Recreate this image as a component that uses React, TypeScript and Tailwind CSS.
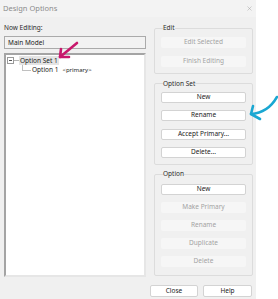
import { X } from "lucide-react";

type Btn = { label: string; disabled?: boolean };

const editButtons: Btn[] = [
  { label: "Edit Selected", disabled: true },
  { label: "Finish Editing", disabled: true },
];

const optionSetButtons: Btn[] = [
  { label: "New" },
  { label: "Rename" },
  { label: "Accept Primary..." },
  { label: "Delete..." },
];

const optionButtons: Btn[] = [
  { label: "New" },
  { label: "Make Primary", disabled: true },
  { label: "Rename", disabled: true },
  { label: "Duplicate", disabled: true },
  { label: "Delete", disabled: true },
];

const DialogButton = ({ label, disabled }: Btn) => (
  <button
    disabled={disabled}
    className={
      disabled
        ? "h-[11px] w-full shrink-0 rounded-[2px] bg-[#f6f6f6] text-[6.5px] leading-none text-[#a3a3a3]"
        : "h-[11px] w-full shrink-0 rounded-[2px] border border-[#d3d3d3] bg-white text-[6.5px] leading-none text-[#1b1b1b]"
    }
  >
    {label}
  </button>
);

const Group = ({
  title,
  buttons,
  className,
  gap,
}: {
  title: string;
  buttons: Btn[];
  className: string;
  gap: string;
}) => (
  <fieldset className={`shrink-0 rounded-[2px] border border-[#dcdcdc] px-[6px] ${className}`}>
    <legend className="ml-[2px] h-[10px] text-[6.5px] leading-[10px] text-[#2a2a2a]">{title}</legend>
    <div className={`flex flex-col ${gap}`}>
      {buttons.map((b) => (
        <DialogButton key={b.label} {...b} />
      ))}
    </div>
  </fieldset>
);

const App = () => {
  return (
    <div className="relative flex h-[299px] w-[278px] bg-white font-['Noto_Sans',sans-serif]">
      <div className="flex h-full w-[256px] flex-col bg-[#f0f0f0]">
        {/* title bar */}
        <div className="flex h-[17px] shrink-0 items-center justify-between bg-[#f3f3f3] pl-[3px] pr-[3px]">
          <span className="text-[7.5px] text-[#8c8c8c]">Design Options</span>
          <X className="h-[7px] w-[7px] text-[#9a9a9a]" strokeWidth={1.5} />
        </div>

        <div className="flex min-h-0 flex-1">
          {/* left column */}
          <div className="flex w-[146px] flex-col pl-[4px]">
            <div className="mt-[6px] h-[10px] shrink-0 text-[6.5px] leading-[10px] text-[#2a2a2a]">Now Editing:</div>
            <div className="mt-[3px] flex h-[13px] shrink-0 items-center border border-[#aaaaaa] bg-[#f2f2f2] pl-[3px] text-[6.5px] text-[#1b1b1b]">
              Main Model
            </div>
            <div className="mt-[4px] min-h-0 flex-1 border-2 border-t-[#a4a4a4] border-l-[#a4a4a4] border-r-[#e6e6e6] border-b-[#e6e6e6] bg-white pt-[1px]">
              <div className="flex h-[9px] items-center pl-[1px]">
                <span className="flex h-[7px] w-[7px] items-center justify-center border border-[#9a9a9a] bg-white">
                  <span className="h-px w-[3px] bg-[#555]" />
                </span>
                <span className="h-px w-[5px] bg-[#b5b5b5]" />
                <span className="bg-[#e4e4e4] px-[1px] text-[6.5px] leading-[9px] text-[#1b1b1b]">Option Set 1</span>
              </div>
              <div className="flex h-[10px] items-start pl-[16px]">
                <span className="h-[6px] w-[9px] border-b border-l border-[#c0c0c0]" />
                <span className="ml-[1px] text-[6.5px] leading-[10px] text-[#1b1b1b]">Option 1</span>
                <span className="ml-[4px] text-[6px] leading-[10px] text-[#1b1b1b]">&lt;primary&gt;</span>
              </div>
            </div>
          </div>

          {/* right column */}
          <div className="ml-[8px] flex w-[99px] flex-col">
            <Group title="Edit" buttons={editButtons} gap="gap-[7.5px]" className="mt-[6px] pb-[6px] pt-[4px]" />
            <Group title="Option Set" buttons={optionSetButtons} gap="gap-[7.5px]" className="mt-[5px] pb-[6px] pt-[3px]" />
            <Group title="Option" buttons={optionButtons} gap="gap-[7px]" className="mt-[4px] pb-[8px] pt-[5px]" />
          </div>
        </div>

        {/* bottom buttons */}
        <div className="flex h-[22px] shrink-0 items-start justify-end gap-[5px] pr-[4px] pt-[8px]">
          <button className="h-[12px] w-[48px] rounded-[2px] border border-[#d3d3d3] bg-white text-[6.5px] leading-none text-[#1b1b1b]">
            Close
          </button>
          <button className="h-[12px] w-[49px] rounded-[2px] border border-[#d3d3d3] bg-white text-[6.5px] leading-none text-[#1b1b1b]">
            Help
          </button>
        </div>
      </div>

      {/* annotation arrows */}
      <svg className="pointer-events-none absolute left-0 top-0" width="278" height="299" viewBox="0 0 278 299">
        <g fill="none" stroke="#c8186c" strokeWidth="2.6" strokeLinecap="round" strokeLinejoin="round">
          <path d="M77 43 L60 57" />
          <path d="M61 49 L60 57 L69 57" />
        </g>
        <g fill="none" stroke="#1aa7d2" strokeWidth="2.6" strokeLinecap="round" strokeLinejoin="round">
          <path d="M277 97 Q268 113 251 114" />
          <path d="M253 106 L251 114 L260 119" />
        </g>
      </svg>
    </div>
  );
};

export default App;
